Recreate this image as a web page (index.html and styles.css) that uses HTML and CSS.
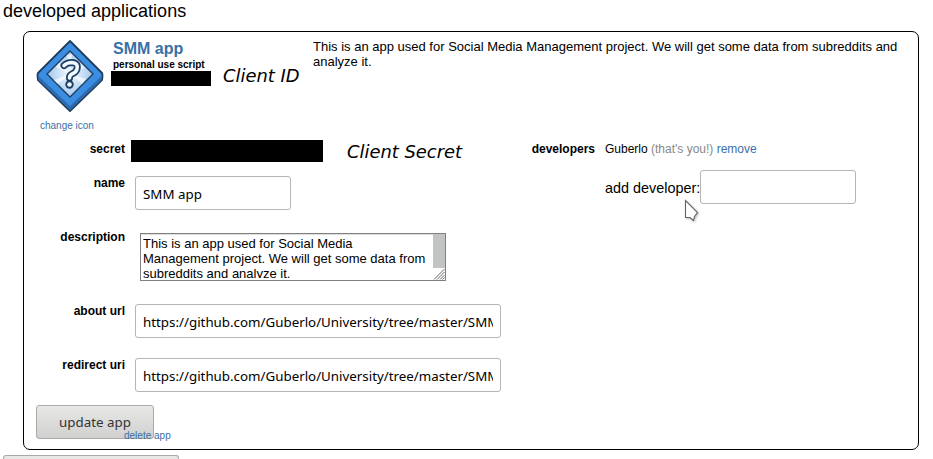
FILE: index.html
```
<!DOCTYPE html>
<html lang="en">
<head>
<meta charset="utf-8">
<title>developed applications</title>
<link rel="stylesheet" href="styles.css">
</head>
<body>
<h1>developed applications</h1>
<section class="app">
  <header class="summary">
    <div class="icon-col">
      <svg class="app-icon" width="68" height="74" viewBox="0 0 68 74">
        <defs><radialGradient id="glow"><stop offset="0" stop-color="#f5faff"/><stop offset="1" stop-color="#a3c9ef"/></radialGradient></defs>
        <path d="M34 2 L66 34 Q67 36 66 41 L34 72 L2 41 Q1 36 2 34Z" fill="#3b8de2" stroke="#203f5e" stroke-width="1.8" stroke-linejoin="round"/>
        <path d="M2.500 37 L34 67 L65.500 37 L65.500 41 L34 71 L2.500 41Z" fill="#2d6baf"/>
        <path d="M34 12 L57 35 L34 58 L11 35Z" fill="url(#glow)" stroke="#203f5e" stroke-width="1.4"/>
        <path d="M34 35 L20 28 L23 24Z M34 35 L45 25 L49 29Z M34 35 L18 41 L22 45Z M34 35 L50 40 L46 45Z M34 35 L31 16 L36 15Z" fill="#fff" opacity=".65"/>
        <path d="M28 26.500 Q31 23.500 36 23.500 Q42.500 24 41 30 Q40 33.500 36 35 Q33.500 36 33.500 39" fill="none" stroke="#1c3d63" stroke-width="7" stroke-linecap="round"/>
        <circle cx="33.500" cy="45.500" r="4.200" fill="#1c3d63"/>
        <path d="M28 26.500 Q31 23.500 36 23.500 Q42.500 24 41 30 Q40 33.500 36 35 Q33.500 36 33.500 39" fill="none" stroke="#f2f8ff" stroke-width="3.600" stroke-linecap="round"/>
        <circle cx="33.500" cy="45.500" r="2.300" fill="#f2f8ff"/>
      </svg>
      <a class="small-link">change icon</a>
    </div>
    <div class="identity">
      <h2>SMM app</h2>
      <h3>personal use script</h3>
      <div class="redacted id-bar"></div>
    </div>
    <div class="note id-note">Client ID</div>
    <p class="about">This is an app used for Social Media Management project. We will get some data from subreddits and analyze it.</p>
  </header>
  <div class="columns">
    <form class="fields">
      <div class="row secret"><label>secret</label><div class="redacted secret-bar"></div><span class="note secret-note">Client Secret</span></div>
      <div class="row name"><label>name</label><div class="field short">SMM app</div></div>
      <div class="row desc"><label>description</label>
        <div class="area">
          <div class="area-text">This is an app used for Social Media<br>Management project. We will get some data from<br>subreddits and analyze it.</div>
          <div class="scroll"><div class="thumb"></div>
            <svg width="12" height="12" viewBox="0 0 12 12"><path d="M1 11.500L11.500 1M4 11.500L11.500 4M7 11.500L11.500 7M9.500 11.500L11.500 9.500" stroke="#666" stroke-width="1"/></svg>
          </div>
        </div>
      </div>
      <div class="row url"><label>about url</label><div class="field long"><span>https://github.com/Guberlo/University/tree/master/SMM</span></div></div>
      <div class="row url"><label>redirect uri</label><div class="field long"><span>https://github.com/Guberlo/University/tree/master/SMM</span></div></div>
    </form>
    <div class="devs">
      <div class="row dev-row"><label>developers</label><span class="dev">Guberlo <span class="muted">(that's you!)</span> <a>remove</a></span></div>
      <div class="add"><span class="add-label">add developer:</span><div class="field short"></div>
        <svg class="pointer" width="16" height="24" viewBox="0 0 16 24"><path d="M1.500 1.500V18.500H6L9.500 21.500L10.500 17.500L13.500 13.500Z" fill="#fff" stroke="#606668" stroke-width="1.100"/></svg>
      </div>
    </div>
  </div>
  <footer class="actions"><div class="button">update app</div><a class="small-link delete">delete app</a></footer>
</section>
<div class="create"></div>
</body>
</html>
```
FILE: styles.css
```
* { box-sizing: border-box; }
html, body { height: 459px; overflow: hidden; }
body { margin: 0; background: #fff; color: #000; font: 12px/15px "Liberation Sans", Arial, sans-serif; }
h1, h2, h3, p { margin: 0; }
h1 { height: 31px; padding-left: 3px; font-size: 18px; line-height: 22px; font-weight: normal; }
a { color: #3a70a8; }
.app { width: 896px; height: 419px; margin-left: 23px; border: 1px solid #000; border-radius: 7px; }
.summary { display: flex; height: 108px; }
.icon-col { width: 87px; padding: 7px 0 0 12px; }
.app-icon { display: block; }
.small-link { font-size: 10px; line-height: 12px; white-space: nowrap; }
.icon-col .small-link { display: block; margin: 7px 0 0 4px; }
.identity { width: 112px; padding: 8px 0 0 2px; }
h2 { font-size: 16px; line-height: 18px; color: #3a70a8; }
h3 { font-size: 10px; line-height: 13px; }
.redacted { background: #000; }
.id-bar { width: 100px; height: 15px; margin-left: -2px; }
.note { font-family: "DejaVu Sans", sans-serif; font-style: italic; font-size: 17.9px; line-height: 22px; white-space: nowrap; }
.id-note { width: 90px; padding-top: 33px; }
.about { width: 592px; padding-top: 7px; font-size: 13px; line-height: 15px; }
.columns { display: flex; height: 265px; }
.fields { width: 477px; }
.row { display: flex; }
label { width: 101px; text-align: right; font-weight: bold; font-size: 12px; line-height: 14px; }
.secret { height: 36px; }
.secret label { padding-top: 2px; }
.secret-bar { width: 192px; height: 22px; margin-left: 6px; }
.secret-note { margin-left: 24px; line-height: 24px; }
.name { height: 57px; }
.field { height: 34px; margin-left: 10px; padding: 0 7px; border: 1px solid #b5b5b5; border-radius: 3px; font: 13.333px/34px "Noto Sans", sans-serif; white-space: nowrap; }
.field span { display: block; height: 32px; overflow: hidden; }
.short { width: 156px; }
.long { width: 366px; }
.desc { height: 71px; }
.desc label { margin-top: -3px; }
.area { display: flex; width: 306px; height: 48px; margin-left: 15px; border: 1px solid #808080; box-shadow: inset 0 1px 0 #ddd; }
.area-text { width: 292px; height: 44px; overflow: hidden; padding: 2px 0 0 2px; font-size: 13px; line-height: 15px; white-space: nowrap; }
.scroll { width: 12px; }
.thumb { height: 34px; background: #c1c4c3; }
.scroll svg { display: block; }
.url { height: 54px; }
.devs { width: 400px; }
.dev-row { height: 30px; padding-top: 2px; }
.devs label { width: 94px; }
.dev { margin-left: 10px; font-size: 12px; line-height: 14px; }
.muted { color: #888; }
.add { position: relative; display: flex; padding-left: 104px; }
.add-label { width: 95px; font-size: 14.4px; line-height: 37px; white-space: nowrap; }
.add .field { margin-left: 0; }
.pointer { position: absolute; left: 183px; top: 29px; filter: drop-shadow(1px 1px 1px #bbb); }
.actions { position: relative; padding-left: 12px; }
.button { width: 118px; height: 34px; border: 1px solid #aaa; border-radius: 3px; background: linear-gradient(#e8e8e7, #d0d0cf); color: #333; font: 13.333px/33px "Noto Sans", sans-serif; text-align: center; }
.delete { position: absolute; left: 100px; top: 25px; }
.create { width: 176px; height: 4px; margin: 5px 0 0 3px; border: 1px solid #aaa; border-bottom: 0; border-radius: 3px 3px 0 0; background: #e8e8e7; }
```
